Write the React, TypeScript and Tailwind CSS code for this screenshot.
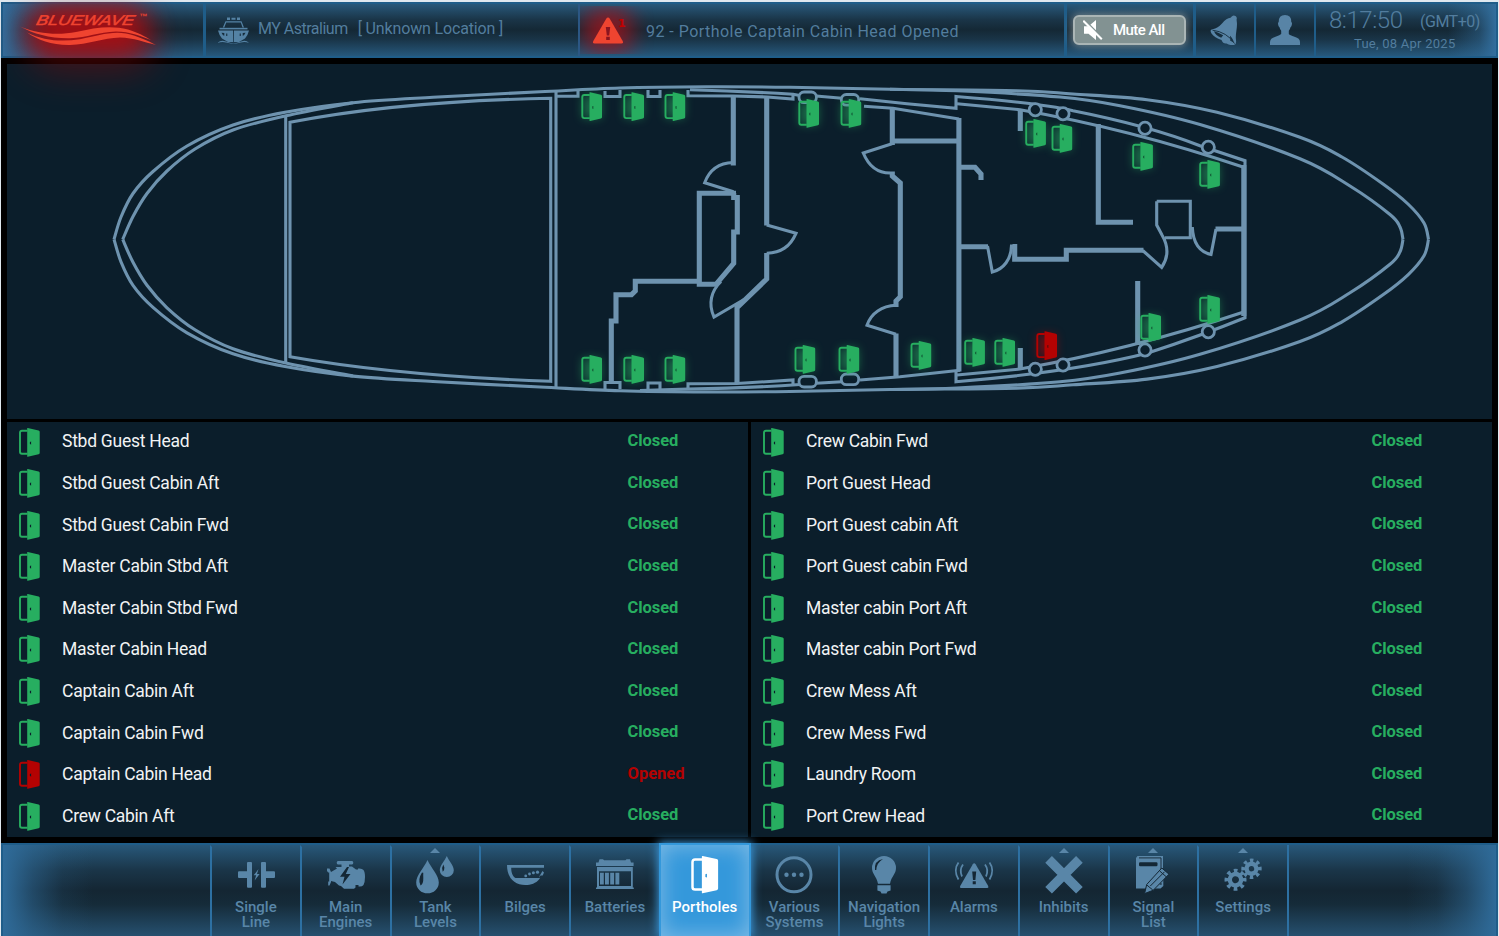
import type { ReactNode } from "react";

type Point = [number, number];

/** Smooth path through all the given points (Catmull-Rom converted to cubic curves). */
function smooth(points: Point[]): string {
  let d = `M${points[0][0]} ${points[0][1]}`;
  for (let i = 0; i < points.length - 1; i++) {
    const p0 = points[Math.max(i - 1, 0)];
    const p1 = points[i];
    const p2 = points[i + 1];
    const p3 = points[Math.min(i + 2, points.length - 1)];
    const c1 = [p1[0] + (p2[0] - p0[0]) / 6, p1[1] + (p2[1] - p0[1]) / 6];
    const c2 = [p2[0] - (p3[0] - p1[0]) / 6, p2[1] - (p3[1] - p1[1]) / 6];
    d += `C${c1[0]} ${c1[1]} ${c2[0]} ${c2[1]} ${p2[0]} ${p2[1]}`;
  }
  return d;
}

const AXIS = 478.8;
const mirror = (points: Point[]): Point[] => points.map(([x, y]) => [x, AXIS - y]);

const OUTER: Point[] = [[114, 239.4], [121, 217], [133, 193.5], [153, 171.5], [187, 146], [233, 125], [285, 112.3], [353, 102.7], [433, 97.3], [540, 91.8], [620, 88], [707, 86.8], [790, 87.3], [890, 89.3], [1017, 90.7], [1073, 94], [1147, 99.7], [1217, 112.3], [1300, 137.3], [1342, 157], [1383, 184], [1408, 204], [1424, 223], [1428.5, 239.4]];
const BOW: Point[] = [[122.7, 239.4], [133, 216.5], [147, 193.5], [167, 171], [195, 149], [233, 130], [286, 115.7], [353, 102.7]];
const STERN: Point[] = [[890, 89.3], [957, 90.8], [1060, 97], [1120, 105.7], [1200, 124.5], [1300, 158.8], [1350, 186], [1390, 214.5], [1400, 227], [1403, 239.4]];

const THIN: string[] = [
  smooth(OUTER),
  smooth(mirror(OUTER)),
  smooth(BOW),
  smooth(mirror(BOW)),
  smooth(STERN),
  smooth(mirror(STERN)),
  "M285.7 115V363.5",
  "M290 122.3Q400 101 550.7 98.3V381.3Q400 376 290 356.7Z",
  "M556 91V388.5",
  "M556 96.3H578V91M605 91V96.5H620V90M648 90V96.5H660V90",
  "M690 89.7Q740 91 793 94.3L800 95.5M816 96L842 98.3M860 98.8L907 103.7L956 108.3V96.5Q1040 103 1073 110.7Q1150 126 1200 145.7L1245 160.7V317.7Q1200 336 1147 353.3Q1073 372 956 381.7V372",
  "M688 90V95.7L733 96L767 97L793 99V94.5",
  "M864 106.3L893 108.3L959 119",
  "M957 103.7L1020 109.7Q1130 129 1243 167",
  "M605 389V382.5H620V389M648 389V383H660V389",
  "M688 389V383.7L737 383.5L793 380V386",
  "M640 390.6L688 389Q750 388 800 384.5M816 383.3L842 381.7M860 380L900 376.7L960 370.3",
  "M957 375L1020 369Q1130 350 1243 312.3",
  "M733 162.5C718 163 709 171 704.7 182.7L733.5 191.7",
  "M766.7 225L796 233.3C790 247 781 252.5 766.7 253.3",
  "M721 281.5C711 291 708 304 714 317L744 299.5",
  "M892 143.7L863.3 153C869 167 878 173 890 173",
  "M896 305.3C882 306 871 313 867 325.3L896 334.3",
  "M1156.7 201.3H1190.3V237.7H1165M1156.7 201.3V225L1162 235C1169 247 1168 258 1161.7 267.3L1142.7 250.5",
  "M1192.3 227C1193 243 1200 252 1211 254.5L1216 229",
  "M987.5 246L992.3 272C1004 269 1011 259 1011.5 246",
];

const THICK: string[] = [
  "M733.3 96V165.5",
  "M736 193.2H699.3V284.3H716L733.7 263.3V232H737.3V197.5H733.7V193",
  "M766.7 97V225.5M766.7 253V279L737 307.7V383.5",
  "M699.3 281.3H635.3V291L631.5 294.7H616V321H611.3V382",
  "M892.3 108V145M893 141H959",
  "M892.3 171.5V176L900.3 183V296.7L896 301V307M896 333.5V377",
  "M958.9 118V371.5",
  "M1020.3 110V131M1098.3 124V222.3H1133M959 167.3H975L981 174V180",
  "M959 246.7H988M1012.5 244.5V246.5H1014.7V259.3H1066.3V250.3H1143.5",
  "M1215.5 229H1244M1243.8 165V316",
  "M1137.7 281V345M1020.3 348V370",
];

const RINGS: Point[] = [[1035.3, 109.7], [1063, 113.7], [1145, 128.3], [1208.3, 147.3], [1035.3, 369.3], [1063, 365], [1145, 350], [1208.3, 331.7]];
const PILLS: Point[] = [[807.7, 97.3], [850, 99.8], [807.7, 381.7], [850, 379.3]];

const PLAN_DOORS: { x: number; y: number; open?: boolean }[] = [
  { x: 581.3, y: 92.3 }, { x: 623.3, y: 92.3 }, { x: 664.5, y: 92.3 },
  { x: 798.3, y: 99 }, { x: 840.5, y: 99 },
  { x: 1025.2, y: 119 }, { x: 1051.5, y: 124 }, { x: 1132.2, y: 142 }, { x: 1199.2, y: 160 },
  { x: 581.3, y: 355 }, { x: 623.3, y: 355 }, { x: 664.5, y: 355 },
  { x: 794.5, y: 345 }, { x: 838.5, y: 345 }, { x: 910.5, y: 341 },
  { x: 964.2, y: 338 }, { x: 994.3, y: 338 }, { x: 1036.3, y: 331.3, open: true },
  { x: 1140.3, y: 313 }, { x: 1199.2, y: 295 },
];

function DoorShape({ color, handle = "#0b1e2b" }: { color: string; handle?: string }) {
  return (
    <>
      <path d="M8.5 2.7H3Q1 2.7 1 4.7V23.8Q1 25.8 3 25.8H8.5" fill="none" stroke={color} strokeWidth="1.9" />
      <path d="M8.2 .3Q8.2-.2 8.8 0L19.6 2.4Q20.7 2.7 20.7 3.7V25Q20.7 26 19.6 26.3L8.8 28.7Q8.2 28.8 8.2 28.2Z" fill={color} />
      <path d="M10.9 14L12.1 13.6V16.6L10.9 16.1Z" fill={handle} />
    </>
  );
}

function DeckPlan() {
  return (
    <svg viewBox="7 64 1485 355" className="block h-[355px] w-[1485px]">
      <g fill="none" stroke="#6e93af" strokeWidth="3.1">
        {THIN.map((d) => <path key={d} d={d} />)}
      </g>
      <g fill="none" stroke="#6e93af" strokeWidth="5.1">
        {THICK.map((d) => <path key={d} d={d} />)}
      </g>
      <g fill="#0b1e2b" stroke="#6e93af" strokeWidth="2.8">
        {RINGS.map(([x, y]) => <circle key={`${x}-${y}`} cx={x} cy={y} r="6.1" />)}
        {PILLS.map(([x, y]) => <rect key={`${x}-${y}`} x={x - 8.7} y={y - 5.3} width="17.4" height="10.6" rx="5" />)}
      </g>
      {PLAN_DOORS.map((p) => {
        const color = p.open ? "#b40202" : "#27ae60";
        return (
          <g key={`${p.x}-${p.y}`} transform={`translate(${p.x} ${p.y})`}>
            <rect x="1" y="3" width="19" height="23" fill={color} className="opacity-50 blur-[5px]" />
            <DoorShape color={color} handle={p.open ? "#5c0a0a" : "#145c38"} />
          </g>
        );
      })}
    </svg>
  );
}

interface Porthole { name: string; open?: boolean }

const LEFT: Porthole[] = [
  { name: "Stbd Guest Head" }, { name: "Stbd Guest Cabin Aft" }, { name: "Stbd Guest Cabin Fwd" },
  { name: "Master Cabin Stbd Aft" }, { name: "Master Cabin Stbd Fwd" }, { name: "Master Cabin Head" },
  { name: "Captain Cabin Aft" }, { name: "Captain Cabin Fwd" }, { name: "Captain Cabin Head", open: true },
  { name: "Crew Cabin Aft" },
];
const RIGHT: Porthole[] = [
  { name: "Crew Cabin Fwd" }, { name: "Port Guest Head" }, { name: "Port Guest cabin Aft" },
  { name: "Port Guest cabin Fwd" }, { name: "Master cabin Port Aft" }, { name: "Master cabin Port Fwd" },
  { name: "Crew Mess Aft" }, { name: "Crew Mess Fwd" }, { name: "Laundry Room" }, { name: "Port Crew Head" },
];

function PortholeList({ items }: { items: Porthole[] }) {
  return (
    <ul className="h-[415px] w-[741px] overflow-hidden bg-[#0b1e2b]">
      {items.map((p) => (
        <li key={p.name} className="flex h-[41.6px] items-center pb-[2.6px] pl-[12px]">
          <svg viewBox="0 0 21 29" className="mt-[1px] h-[29px] w-[21px] shrink-0">
            <DoorShape color={p.open ? "#b40202" : "#27ae60"} />
          </svg>
          <span className="ml-[22px] w-[565.5px] text-[17.5px] tracking-[-0.26px] text-[#f1f3f4]">{p.name}</span>
          <span className={p.open ? "text-[16.5px] font-bold text-[#b40202]" : "text-[16.5px] font-bold tracking-[-0.05px] text-[#27ae60]"}>
            {p.open ? "Opened" : "Closed"}
          </span>
        </li>
      ))}
    </ul>
  );
}

function Gear({ x, y, r }: { x: number; y: number; r: number }) {
  const rt = r - 1.9;
  const step = (2 * Math.PI * rt) / 16;
  return (
    <g transform={`translate(${x} ${y}) rotate(-12)`} fill="none" stroke="currentColor">
      <circle r={r - 5.3} strokeWidth="4.4" />
      <circle r={rt} strokeWidth="3.8" strokeDasharray={`${step} ${step}`} />
    </g>
  );
}

const DARK = "#142735";

const ICONS: Record<string, ReactNode> = {
  single: (
    <g fill="currentColor">
      <path d="M10.5 6H14Q15 6 15 7V30.7Q15 31.7 14 31.7H11Q10 31.7 10 30.7V22H2Q1 22 1 21V16.3Q1 15.3 2 15.3H10V7Q10 6 11 6Z" />
      <path d="M25 6H28Q29 6 29 7V15.3H37Q38 15.3 38 16.3V21Q38 22 37 22H29V30.7Q29 31.7 28 31.7H25Q24 31.7 24 30.7V7Q24 6 25 6Z" />
      <path d="M21.5 13L16.7 19.3H19.2L17.6 24.6L22.6 18H20Z" />
    </g>
  ),
  engine: (
    <g fill="currentColor">
      <path d="M11 5H25Q26.3 5 26.3 6.8T25 8.6H22V10.5H25L29 13.5H31V12.5Q35 12 36.5 14Q38 16 38 21T36.5 29Q35 31 31.5 30.5V29H28.5V31.5L27 32.7H17L14 30L12 29.5L8 26L4 25V16L10 12.5L8.5 11H14.5V8.6H11Q9.7 8.6 9.7 6.8T11 5Z" />
      <path d="M0 12.5H2.5L4 16V26L2.5 29.5H1.2V25.5H2.2V16.5H1.2L0 15Z" />
      <path d="M20 11L13 20.7H17.5L15.5 28.5L23.5 18H18.8L22 11Z" fill={DARK} />
    </g>
  ),
  tank: (
    <g fill="currentColor">
      <path d="M11.5 4C15 12 22.8 19 22.8 26.5A11.3 10.8 0 0 1 .2 26.5C.2 19 8 12 11.5 4Z" />
      <path d="M30.8 0C33 5 37.8 9.5 37.8 14.2A7 6.8 0 0 1 23.8 14.2C23.8 9.5 28.6 5 30.8 0Z" />
      <path d="M6 16.5Q1.5 23.5 4.5 29.5Q7.5 28 7.3 22T7.5 17Z" fill={DARK} />
      <path d="M27.3 8.5Q25.2 12 26.7 15.7Q28.6 14.5 28.4 11.5Z" fill={DARK} />
    </g>
  ),
  bilges: (
    <g fill="currentColor">
      <path d="M1 9H38V11.7H5.2C5.2 16 6.3 20 9.5 22H34L33 23.4C30 27 25 29 19.3 29C8.5 29 1 22 1 9Z" />
      <circle cx="19.7" cy="19.9" r="1.4" /><circle cx="23.5" cy="18" r="1.4" />
      <circle cx="27.4" cy="16.8" r="1.5" /><circle cx="31.5" cy="16.2" r="1.6" />
      <path d="M33 21.8L33.7 19.7L36.5 15L38 16.5L36.7 19.5H34.5Z" />
    </g>
  ),
  battery: (
    <g fill="currentColor">
      <path d="M3.5 3.3H7L8 4.3H29.5L30.5 3.3H34L35 6.5H37.6V10H0V6.5H2.5Z" />
      <path fillRule="evenodd" d="M1 11H36.8V31.6H37.8V33H0V31.6H1ZM3 15.3V30H35V15.3Z" />
      <path d="M4 16.7H7.8V28.6H4ZM9 16.7H12.9V28.6H9ZM14.2 16.7H18.1V28.6H14.2ZM19.4 16.7H23.3V28.6H19.4Z" />
    </g>
  ),
  door: (
    <g transform="translate(5.2 0) scale(1.3)">
      <DoorShape color="#ffffff" handle="#3498db" />
    </g>
  ),
  various: (
    <g>
      <circle cx="19" cy="18.8" r="17" fill="none" stroke="currentColor" strokeWidth="3" />
      <g fill="currentColor"><circle cx="11.5" cy="18.8" r="2.2" /><circle cx="19" cy="18.8" r="2.2" /><circle cx="26.5" cy="18.8" r="2.2" /></g>
    </g>
  ),
  bulb: (
    <g fill="currentColor">
      <path d="M19 0A12 12 0 0 1 31 12C31 18 26.5 20 25 27.7H13C11.5 20 7 18 7 12A12 12 0 0 1 19 0Z" />
      <path d="M12.4 29.3H25.6V34.5L22.5 35.5L21.5 37.6H16.5L15.5 35.5L12.4 34.5Z" />
      <path d="M10 14Q9 4.5 18 3Q11.5 7 11.3 14Z" fill={DARK} />
    </g>
  ),
  alarms: (
    <g>
      <path d="M19.2 7.3Q20 7.3 20.6 8.3L33.2 30Q34 32 32.3 32H6Q4.3 32 5.2 30L17.8 8.3Q18.4 7.3 19.2 7.3Z" fill="currentColor" />
      <path d="M17.2 15.5H21.2L20.4 24H18ZM17.7 25.2H20.8V28.3H17.7Z" fill={DARK} />
      <g fill="none" stroke="currentColor" strokeWidth="1.8">
        <path d="M3.5 6.5Q-2 14 3.5 23.5M8 8.5Q4 14 7 20.5M34.5 6.5Q40 14 34.5 23.5M30 8.5Q34 14 31 20.5" />
      </g>
    </g>
  ),
  inhibits: <path d="M3.6 3.4L34.4 34.2M34.4 3.4L3.6 34.2" stroke="currentColor" strokeWidth="9.4" />,
  signal: (
    <g>
      <path d="M3.5 0H29V12L19 24L11 32.5H2V2Z" fill="currentColor" />
      <path d="M5 1.9H27V14" fill="none" stroke={DARK} strokeWidth=".9" />
      <rect x="5" y="6.3" width="18.5" height="4" rx="1.2" fill={DARK} />
      <path d="M26.5 32.5H17.5L29.3 19V30Z" fill="currentColor" />
      <path d="M25 28L27.5 27V29Z" fill={DARK} />
      <path d="M27.8 12L35 18.2L19.3 34.2L10.6 37.6L12.7 28.5Z" fill="currentColor" stroke={DARK} strokeWidth="1" />
      <path d="M12.8 29L18.8 34M16.3 30L30.5 15.8M25.7 15L32.5 21" stroke={DARK} strokeWidth="1" />
    </g>
  ),
  settings: <><Gear x={11.5} y={23.7} r={11} /><Gear x={27.5} y={12.7} r={10.2} /></>,
};

const NAV: { icon: string; label: string; menu?: boolean; active?: boolean }[] = [
  { icon: "single", label: "Single\nLine" },
  { icon: "engine", label: "Main\nEngines" },
  { icon: "tank", label: "Tank\nLevels", menu: true },
  { icon: "bilges", label: "Bilges" },
  { icon: "battery", label: "Batteries" },
  { icon: "door", label: "Portholes", active: true },
  { icon: "various", label: "Various\nSystems" },
  { icon: "bulb", label: "Navigation\nLights" },
  { icon: "alarms", label: "Alarms" },
  { icon: "inhibits", label: "Inhibits", menu: true },
  { icon: "signal", label: "Signal\nList", menu: true },
  { icon: "settings", label: "Settings", menu: true },
];

function Logo() {
  return (
    <svg viewBox="0 0 200 56" className="relative h-[56px] w-[200px] overflow-visible">
      <text x="0" y="0" transform="translate(35.5 24.5) skewX(-14)" fontSize="14.2" fontStyle="italic" textLength="98" lengthAdjust="spacingAndGlyphs" fill="#ef4430" stroke="#ef4430" strokeWidth=".45" className="font-['Liberation_Sans',sans-serif]">BLUEWAVE</text>
      <text x="139.5" y="18.5" fontSize="7.5" fontWeight="700" textLength="8" lengthAdjust="spacingAndGlyphs" fill="#ef4430" className="font-['Liberation_Sans',sans-serif]">™</text>
      <path d="M20 26.5C38 34 58 35.5 76 32C95 27.5 112 25 128 29.5C138 32.5 145 36.5 151 40C140 36 130 31.5 116 31.5C98 32 88 37.5 70 38.2C50 38.5 34 34 20 26.5Z" fill="#ef4430" />
      <path d="M27 32.5C44 41 62 42 80 39.2C98 36 110 31 126 33.5C138 36 148 41 156 45C144 42 134 38 120 37.5C103 38 88 44.5 70 45C52 45.3 38 40 27 32.5Z" fill="#ef4430" />
    </svg>
  );
}

function ShipIcon() {
  return (
    <svg viewBox="0 0 32 27" className="h-[27px] w-[32px] shrink-0 text-[#5482a4]">
      <g fill="currentColor">
        <path d="M10 .5H13V3H10ZM14.5 .8H18.5V2.8H14.5ZM20 .5H23V3H20Z" />
        <path d="M8.5 4.3H24.5L27 10.5H25.5L23.8 5.6H9.2L7.3 10.5H5.8Z" />
        <path d="M2.5 10.8H30.5V12.4H2.5Z" />
        <path fillRule="evenodd" d="M1 13.5H16.2V25H11L5 21.5Q2 18 1 13.5ZM4.5 15.8L6 18.3L7.3 18.8V16ZM9.2 16.5V19H10.3V16.5Z" />
        <path fillRule="evenodd" d="M32 13.5H17V25H22L28 21.5Q31 18 32 13.5ZM28.5 15.8L27 18.3L25.7 18.8V16ZM23.8 16.5V19H22.7V16.5Z" />
        <path d="M.5 26Q4 22.5 8 24.2L16.5 26.8L25 24.2Q29 22.5 32 26Q28 24.5 24 25.5L16.5 27L9 25.5Q5 24.5 .5 26Z" />
      </g>
    </svg>
  );
}

function Header() {
  return (
    <header className="relative flex h-[56px] border-2 border-[#1f5d89] bg-[linear-gradient(180deg,#28587a_0%,#1a3548_30%,#142835_50%,#193447_68%,#26587c_100%)] text-[#527d9e]">
      <div className="pointer-events-none absolute inset-y-0 left-0 w-[48px] bg-[linear-gradient(90deg,#326e9d_0%,rgba(50,110,157,0.55)_40%,transparent_100%)]" />
      <div className="pointer-events-none absolute inset-y-0 right-0 w-[48px] bg-[linear-gradient(270deg,#326e9d_0%,rgba(50,110,157,0.45)_35%,transparent_100%)]" />
      <div className="relative z-10 -ml-[2px] -mt-[2px] h-[56px] w-[202px] shrink-0">
        <div className="absolute left-[25px] top-[10px] h-[60px] w-[130px] rounded-full bg-[#7d0606] opacity-50 blur-[18px]" />
        <div className="absolute inset-0 overflow-hidden">
          <div className="absolute left-[28px] top-[4px] h-[50px] w-[118px] rounded-[20px] bg-[#b80d12] opacity-85 blur-[14px]" />
        </div>
        <div className="relative -ml-px -mt-[2px]"><Logo /></div>
      </div>
      <div className="relative flex w-[375px] shrink-0 items-center border-l-[3px] border-[#1f5d89] pl-[11px] text-[16px]">
        <ShipIcon />
        <span className="mb-[2px] ml-[9px] whitespace-pre tracking-[-0.5px]">MY Astralium</span>
        <span className="mb-[2px] ml-[10px] whitespace-pre tracking-[-0.15px]">[ Unknown Location ]</span>
      </div>
      <div className="relative flex w-[486px] shrink-0 items-center border-l-2 border-[#2c5784]">
        <div className="absolute inset-y-[2px] left-0 w-[90px] overflow-hidden">
          <div className="absolute left-[5px] top-[3px] h-[44px] w-[46px] rounded-[12px] bg-[#ad1118] opacity-75 blur-[11px]" />
        </div>
        <div className="relative ml-[12px] mt-[1px] h-[28px] w-[36px]">
          <svg viewBox="0 0 32 27" className="h-[27px] w-[32px]">
            <path d="M16 .5Q17 .5 17.8 1.8L30.7 24Q31.8 26.5 29.5 26.5H2.5Q.2 26.5 1.3 24L14.2 1.8Q15 .5 16 .5Z" fill="#ef4430" />
            <path d="M13.8 10H18.2L17.2 18.5H14.8ZM14.2 19.8H17.8V23H14.2Z" fill="#8b1420" />
          </svg>
          <span className="absolute left-[26px] top-0 font-['DejaVu_Sans',sans-serif] text-[11px] font-bold leading-[13px] text-[#c40000]">1</span>
        </div>
        <span className="ml-[18px] mt-[3px] whitespace-nowrap text-[16px] tracking-[0.47px]">92 - Porthole Captain Cabin Head Opened</span>
      </div>
      <div className="relative flex w-[129px] shrink-0 items-center border-l-[3px] border-[#1f5d89] pl-[6px]">
        <button className="flex h-[30px] w-[113px] items-center rounded-[6px] border-2 border-[#aab5b5] bg-[#829292] pl-[8px] shadow-[0_0_8px_1px_rgba(220,220,210,0.45)]">
          <svg viewBox="0 0 20 20" className="h-[20px] w-[20px]">
            <path d="M1 6.2H5.5L13 0V20L5.5 13.8H1Z" fill="#fff" />
            <path d="M1.8 .2L20.5 18.9" stroke="#829292" strokeWidth="1.6" />
            <path d="M.3 .8L18.8 19.3" stroke="#fff" strokeWidth="2" />
          </svg>
          <span className="ml-[10px] whitespace-nowrap text-[15px] font-medium tracking-[-0.55px] text-white">Mute All</span>
        </button>
      </div>
      <div className="relative flex w-[61px] shrink-0 items-center justify-center border-l-[3px] border-[#1f5d89]">
        <svg viewBox="0 0 28 30" className="mr-[2px] h-[30px] w-[28px] text-[#5884a6]">
          <path fillRule="evenodd" d="M22 1.2A2.9 2.9 0 0 1 26.6 4.4C26.6 6 27 7 27 9C27 15 25.2 20 26 25Q26.7 29.5 24 30Q20.5 30.7 16.5 28.5Q13 29 11.5 25Q4.5 22.5 1.5 18.5Q-.8 14.5 2.5 14.2Q8 13 12 8.5Q16.5 3 20.5 2.8ZM4 16.3Q5.5 20.5 11.2 22.8L13.2 20.3Q8 17.3 4 16.3ZM20 22Q20.8 24 20 25.5L23.6 27.4Q23.7 24.5 20 20.7Z" fill="currentColor" />
          <path d="M2.5 15.2Q17 17 24.5 28.5" stroke="#1a3446" strokeWidth="1" fill="none" />
        </svg>
      </div>
      <div className="relative flex w-[60px] shrink-0 items-center justify-center border-l-2 border-[#1f5d89]">
        <svg viewBox="0 0 30 30" className="mr-[1px] h-[30px] w-[30px] text-[#5884a6]">
          <path d="M15 0Q21.5 0 21.3 7Q22.5 7.4 21.8 10Q21.3 12 20.5 12.2Q20 14.6 18.8 15.8V19Q19.8 20.3 24.5 21.7Q30 23.3 30 27V30H0V27Q0 23.3 5.5 21.7Q10.2 20.3 11.2 19V15.8Q10 14.6 9.5 12.2Q8.7 12 8.2 10Q7.5 7.4 8.7 7Q8.5 0 15 0Z" fill="currentColor" />
        </svg>
      </div>
      <div className="relative flex flex-1 flex-col border-l-2 border-[#1f5d89] pl-[13px] pt-[1px]">
        <div className="flex items-center whitespace-nowrap">
          <span className="w-[91px] text-[24px] font-light leading-[30px] tracking-[-0.45px]">8:17:50</span>
          <span className="mt-[3px] text-[16px] tracking-[-0.5px]">(GMT+0)</span>
        </div>
        <span className="ml-[25px] whitespace-nowrap text-[13px] leading-[18px] tracking-[0.25px]">Tue, 08 Apr 2025</span>
      </div>
    </header>
  );
}

function Footer() {
  return (
    <nav className="relative flex h-[93px] border-2 border-b-0 border-[#1f5d89] bg-[linear-gradient(180deg,#28587a_0%,#1a3548_28%,#142633_50%,#152b39_65%,#26506f_100%)] pl-[207px]">
      <div className="pointer-events-none absolute inset-y-0 left-0 w-[90px] bg-[linear-gradient(90deg,#2f6b99_0%,rgba(47,107,153,0.5)_33%,rgba(47,107,153,0.13)_66%,transparent_100%)]" />
      <div className="pointer-events-none absolute inset-y-0 right-0 w-[90px] bg-[linear-gradient(270deg,#2f6b99_0%,rgba(47,107,153,0.5)_33%,rgba(47,107,153,0.13)_66%,transparent_100%)]" />
      <div className="relative flex h-[91px] w-[1079px] border-r-2 border-[#2d70a2]">
        {NAV.map((item) => (
          <div
            key={item.label}
            className={
              item.active
                ? "relative z-10 -mr-[2px] -mt-[2px] flex flex-1 flex-col items-center border-2 border-b-0 border-[#3498db] bg-[#3498db] pt-[2px] text-white shadow-[0_0_9px_1px_#3b9ade,inset_0_0_22px_#83bde6]"
                : "flex flex-1 flex-col items-center border-l-2 border-t-2 border-l-[#2d70a2] border-t-transparent text-[#5986a8]"
            }
          >
            <div className="flex h-[9px] items-start">
              {item.menu && (
                <svg viewBox="0 0 10 5" className="mt-px h-[5px] w-[10px]"><path d="M5 0L10 5H0Z" fill="currentColor" /></svg>
              )}
            </div>
            <svg viewBox="0 0 38 38" className="h-[38px] w-[38px] shrink-0 overflow-visible">{ICONS[item.icon]}</svg>
            <span className="mt-[6px] whitespace-pre text-center text-[15px] font-medium leading-[15.3px]">{item.label}</span>
          </div>
        ))}
      </div>
    </nav>
  );
}

export default function App() {
  return (
    <div className="flex h-[936px] w-[1499px] flex-col overflow-hidden bg-[#dfe8ef] pl-px pr-px pt-[2px] font-['Roboto','Noto_Sans',sans-serif]">
      <div className="flex flex-1 flex-col bg-black">
        <Header />
        <main className="mb-[6px] ml-[6px] mt-[6px] flex w-[1485px] flex-1 flex-col gap-[3px]">
          <section className="h-[355px] bg-[#0b1e2b]"><DeckPlan /></section>
          <section className="flex gap-[3px]">
            <PortholeList items={LEFT} />
            <PortholeList items={RIGHT} />
          </section>
        </main>
        <Footer />
      </div>
    </div>
  );
}
